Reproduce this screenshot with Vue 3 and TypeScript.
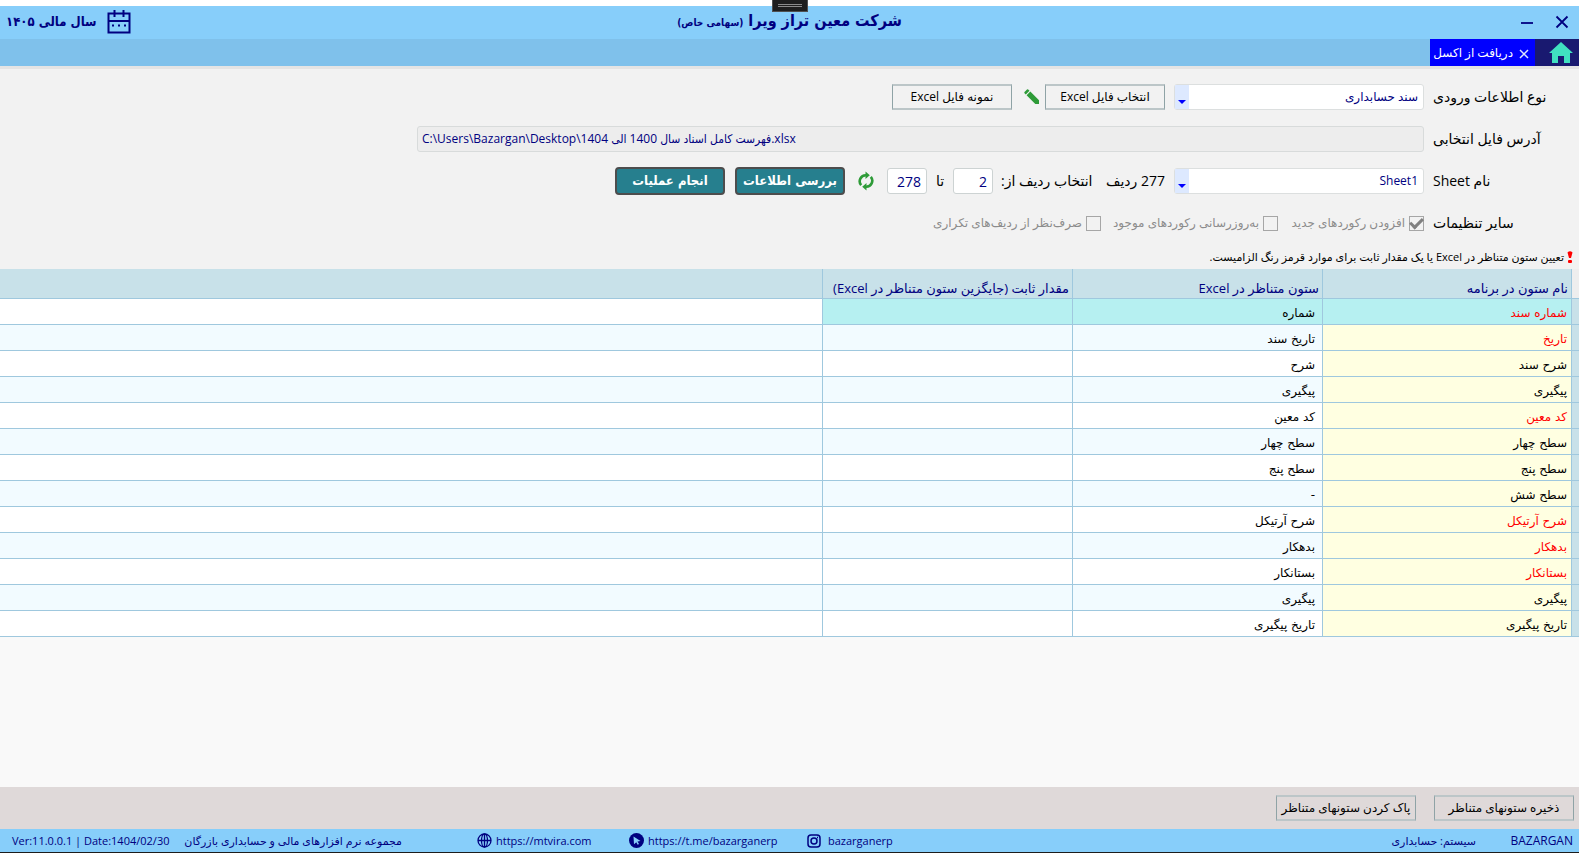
<script setup lang="ts">
import { ref } from 'vue'

interface MappingRow {
  name: string
  excel: string
  required?: boolean
}

const rows: MappingRow[] = [
  { name: 'شماره سند', excel: 'شماره', required: true },
  { name: 'تاریخ', excel: 'تاریخ سند', required: true },
  { name: 'شرح سند', excel: 'شرح' },
  { name: 'پیگیری', excel: 'پیگیری' },
  { name: 'کد معین', excel: 'کد معین', required: true },
  { name: 'سطح چهار', excel: 'سطح چهار' },
  { name: 'سطح پنج', excel: 'سطح پنج' },
  { name: 'سطح شش', excel: '-' },
  { name: 'شرح آرتیکل', excel: 'شرح آرتیکل', required: true },
  { name: 'بدهکار', excel: 'بدهکار', required: true },
  { name: 'بستانکار', excel: 'بستانکار', required: true },
  { name: 'پیگیری', excel: 'پیگیری' },
  { name: 'تاریخ پیگیری', excel: 'تاریخ پیگیری' },
]

const selected = ref(0)
const inputType = ref('سند حسابداری')
const sheet = ref('Sheet1')
const filePath = ref('C:\\Users\\Bazargan\\Desktop\\فهرست کامل اسناد سال 1400 الی 1404.xlsx')
const fromRow = ref('2')
const toRow = ref('278')
</script>

<template>
  <div class="window" dir="rtl">
    <div class="handle"><i></i><i></i></div>

    <header class="titlebar">
      <div class="side controls">
        <button type="button" aria-label="بستن">
          <svg width="14" height="14" viewBox="0 0 14 14"><path d="M1.5 1.5l11 11M12.5 1.5l-11 11" /></svg>
        </button>
        <button type="button" aria-label="کوچک کردن">
          <svg width="14" height="14" viewBox="0 0 14 14"><path d="M1 8h12" /></svg>
        </button>
      </div>
      <h1>شرکت معین تراز ویرا <small>(سهامی خاص)</small></h1>
      <div class="side year">
        <svg width="24" height="24" viewBox="0 0 24 24" fill="none" stroke="#000080" stroke-width="2">
          <rect x="1.5" y="3.5" width="21" height="19" />
          <path d="M1 11h22M7.5 0v7M16.5 0v7" />
          <path d="M5 15.5h2M11 15.5h2M17 15.5h2" />
        </svg>
        <span>سال مالی ۱۴۰۵</span>
      </div>
    </header>

    <nav class="tabs">
      <button type="button" class="home" aria-label="خانه">
        <svg width="24" height="22" viewBox="0 0 24 22"><path d="M12 0L0 11h3v10h6v-7h6v7h6V11h3z" fill="#40e0c0" /></svg>
      </button>
      <div class="tab">
        <button type="button" class="tab-close" aria-label="بستن زبانه">
          <svg width="10" height="10" viewBox="0 0 10 10"><path d="M1 1l8 8M9 1L1 9" stroke="#dfe4ff" stroke-width="1.5" /></svg>
        </button>
        <a href="#excel">دریافت از اکسل</a>
      </div>
    </nav>

    <form class="form" @submit.prevent>
      <div class="row">
        <label class="caption" for="type">نوع اطلاعات ورودی</label>
        <span class="combo">
          <select id="type" v-model="inputType"><option>سند حسابداری</option></select>
          <span class="arrow"></span>
        </span>
        <button type="button" class="btn pick">انتخاب فایل Excel</button>
        <svg class="pencil" width="16" height="16" viewBox="0 0 16 16" fill="#2e9b38">
          <path d="M0.5 3L3 0.5q0.6-0.5 1.2 0L5.5 1.8 1.8 5.5 0.5 4.2q-0.5-0.6 0-1.2zM2.6 6.3L6.3 2.6 15 11.3V15h-3.7z" />
        </svg>
        <button type="button" class="btn sample">نمونه فایل Excel</button>
      </div>

      <div class="row">
        <label class="caption" for="path">آدرس فایل انتخابی</label>
        <input id="path" v-model="filePath" class="path" type="text" dir="ltr" readonly />
      </div>

      <div class="row">
        <label class="caption" for="sheet">نام Sheet</label>
        <span class="combo">
          <select id="sheet" v-model="sheet"><option>Sheet1</option></select>
          <span class="arrow"></span>
        </span>
        <span class="count">277 ردیف</span>
        <label class="from" for="from">انتخاب ردیف از:</label>
        <input id="from" v-model="fromRow" class="num" type="text" />
        <label class="to" for="to">تا</label>
        <input id="to" v-model="toRow" class="num" type="text" />
        <button type="button" class="refresh" aria-label="بازخوانی">
          <svg width="16" height="20" viewBox="0 0 16 20" fill="none" stroke="#2e9b38" stroke-width="2.6">
            <path d="M3.2 14.2A6 6 0 0 1 8 4.3" />
            <path d="M12.8 5.8A6 6 0 0 1 8 15.7" />
            <path d="M7.5 0.5v7.6L11.8 4.3zM8.5 19.5v-7.6L4.2 15.7z" fill="#2e9b38" stroke="none" />
          </svg>
        </button>
        <button type="button" class="action">بررسی اطلاعات</button>
        <button type="button" class="action">انجام عملیات</button>
      </div>

      <div class="row">
        <span class="caption">سایر تنظیمات</span>
        <label class="check c1"><input type="checkbox" checked disabled /><span>افزودن رکوردهای جدید</span></label>
        <label class="check c2"><input type="checkbox" disabled /><span>به‌روزرسانی رکوردهای موجود</span></label>
        <label class="check c3"><input type="checkbox" disabled /><span>صرف‌نظر از ردیف‌های تکراری</span></label>
      </div>

      <p class="note">
        <svg width="6" height="12" viewBox="0 0 6 12" fill="#f00"><path d="M0.5 1.5Q3-1 5.5 1.5L4 7H2z" /><rect x="1" y="9" width="4" height="3" rx="1" /></svg>
        <span>تعیین ستون متناظر در Excel یا یک مقدار ثابت برای موارد قرمز رنگ الزامیست.</span>
      </p>
    </form>

    <main>
      <table>
        <colgroup>
          <col class="w-mark" /><col class="w-name" /><col class="w-col" /><col class="w-col" /><col />
        </colgroup>
        <thead>
          <tr>
            <td class="corner"></td>
            <th scope="col">نام ستون در برنامه</th>
            <th scope="col">ستون متناظر در Excel</th>
            <th scope="col">مقدار ثابت (جایگزین ستون متناظر در Excel)</th>
            <td class="rest"></td>
          </tr>
        </thead>
        <tbody>
          <tr v-for="(row, i) in rows" :key="i" :class="{ selected: i === selected }" @click="selected = i">
            <td class="mark"></td>
            <td class="name" :class="{ required: row.required }">{{ row.name }}</td>
            <td class="excel">{{ row.excel }}</td>
            <td class="fixed"></td>
            <td class="rest"></td>
          </tr>
        </tbody>
      </table>
    </main>

    <div class="actions">
      <button type="button" class="btn">ذخیره ستونهای متناظر</button>
      <button type="button" class="btn">پاک کردن ستونهای متناظر</button>
    </div>

    <footer class="status" dir="ltr">
      <span class="version">Ver:11.0.0.1 | Date:1404/02/30</span>
      <span class="vendor" dir="rtl">مجموعه نرم افزارهای مالی و حسابداری بازرگان</span>
      <a class="site" href="#site">
        <svg width="15" height="15" viewBox="0 0 15 15" fill="none" stroke="#000080" stroke-width="1.3">
          <circle cx="7.5" cy="7.5" r="6.5" /><ellipse cx="7.5" cy="7.5" rx="3" ry="6.5" /><path d="M7.5 1v13M1 7.5h13" />
        </svg>https://mtvira.com</a>
      <a class="telegram" href="#telegram">
        <svg width="15" height="15" viewBox="0 0 15 15">
          <circle cx="7.5" cy="7.5" r="7.5" fill="#000080" /><path d="M4.5 3.5l7 4.5-3 0.5 1.5 2.5-1.3 0.7-1.4-2.5-2.3 2z" fill="#87cefa" />
        </svg>https://t.me/bazarganerp</a>
      <a class="insta" href="#instagram">
        <svg width="14" height="14" viewBox="0 0 14 14" fill="none" stroke="#000080" stroke-width="1.5">
          <rect x="1" y="1" width="12" height="12" rx="3" /><circle cx="7" cy="7" r="3" /><path d="M10 3.5h1" />
        </svg>bazarganerp</a>
      <span class="system" dir="rtl">سیستم: حسابداری</span>
      <span class="user">BAZARGAN</span>
    </footer>
  </div>
</template>

<style>
body {
  margin: 0;
}
</style>

<style scoped>
.window {
  position: relative;
  display: flex;
  flex-direction: column;
  box-sizing: border-box;
  min-height: 100vh;
  padding-top: 6px;
  background: #fff;
  border-bottom: 1px solid #1c1c1c;
  font-family: "Open Sans", "DejaVu Sans", sans-serif;
  font-size: 12px;
  white-space: nowrap;
  overflow: hidden;
}
.window * {
  box-sizing: border-box;
}
button,
input,
select {
  font: inherit;
  margin: 0;
}
button {
  padding: 0;
  border: 0;
  background: none;
}
.handle {
  position: absolute;
  top: 0;
  left: 50%;
  width: 36px;
  height: 12px;
  margin-left: -18px;
  padding: 4px 5px;
  display: flex;
  flex-direction: column;
  gap: 1px;
  background: #1e1e1e;
  border: 1px solid #505050;
  border-top: 0;
}
.handle i {
  height: 1px;
  background: #8a8a8a;
}
.titlebar {
  display: flex;
  align-items: center;
  height: 33px;
  padding-bottom: 2px;
  background: #87cefa;
  color: #000080;
  font-family: "DejaVu Sans Condensed", "DejaVu Sans", sans-serif;
}
.side {
  flex: 1;
  display: flex;
  align-items: center;
}
.controls {
  gap: 21px;
  padding-right: 10px;
}
.controls button {
  display: flex;
}
.controls path {
  stroke: #000080;
  stroke-width: 1.8;
}
.titlebar h1 {
  margin: 0;
  padding-left: 4px;
  font-size: 16px;
  line-height: 30px;
  font-weight: 700;
}
.titlebar small {
  font-size: 10px;
}
.year {
  justify-content: flex-end;
  gap: 10px;
  padding-left: 6px;
  font-size: 13px;
  font-weight: 700;
}
.tabs {
  display: flex;
  height: 27px;
  background: #7fc1eb;
}
.home {
  display: flex;
  align-items: center;
  justify-content: center;
  width: 44px;
  padding-left: 8px;
  background: #191970;
}
.tab {
  display: flex;
  align-items: center;
  gap: 6px;
  width: 105px;
  padding-right: 6px;
  background: #00f;
}
.tab-close {
  display: flex;
  margin-top: 3px;
}
.tab a {
  color: #fff;
  text-decoration: none;
}
.form {
  display: flex;
  flex-direction: column;
  gap: 16px;
  padding-top: 18px;
  background: #f2f2f2;
  box-shadow: inset 0 3px 0 #e4e4e4;
}
.row {
  display: flex;
  align-items: center;
  height: 26px;
}
.caption {
  flex: none;
  width: 155px;
  padding: 0 0 2px 9px;
  text-align: left;
  font-size: 14px;
}
.combo {
  position: relative;
  flex: none;
  width: 250px;
  height: 26px;
}
.combo select {
  width: 100%;
  height: 100%;
  padding: 0 5px 2px 20px;
  appearance: none;
  border: 1px solid #dcdfdf;
  border-radius: 3px;
  background: #fff;
  color: #000080;
}
.arrow {
  position: absolute;
  left: 1px;
  top: 1px;
  width: 14px;
  height: 24px;
  background: #dde9ff;
  pointer-events: none;
}
.arrow::after {
  content: "";
  position: absolute;
  left: 3px;
  top: 15px;
  border: 4px solid transparent;
  border-top-color: #00f;
  border-bottom: 0;
}
.btn {
  flex: none;
  width: 120px;
  height: 26px;
  padding-bottom: 1px;
  border: 2px solid #bcc6c8;
  border-right: 1px solid #8fa3a6;
  border-left: 1px solid #8fa3a6;
  color: #000;
}
.pick {
  margin-right: 9px;
}
.pencil {
  margin: 0 5px 0 12px;
}
.path {
  flex: 0 1 1007px;
  min-width: 0;
  height: 26px;
  padding: 0 4px 1px;
  border: 1px solid #d8dbdb;
  border-radius: 3px;
  background: #ededed;
  color: #000080;
  font-family: "Open Sans", "DejaVu Sans Condensed", "DejaVu Sans", sans-serif;
}
.count {
  width: 76px;
  padding: 0 9px 2px 0;
  font-size: 14px;
}
.from {
  width: 105px;
  padding: 0 0 2px 8px;
  text-align: left;
  font-size: 14px;
}
.num {
  flex: none;
  width: 40px;
  height: 26px;
  padding: 0 5px;
  border: 1px solid #cdd3d3;
  border-radius: 3px;
  background: #fff;
  color: #000080;
  font-size: 14px;
  text-align: right;
}
.to {
  width: 26px;
  padding-bottom: 2px;
  text-align: center;
  font-size: 14px;
}
.refresh {
  display: flex;
  margin: 0 13px;
}
.action {
  flex: none;
  width: 110px;
  height: 28px;
  margin-left: 10px;
  padding-bottom: 2px;
  border: 2px solid #4d4d4d;
  border-radius: 4px;
  background: #267f8e;
  color: #fff;
  font-family: "DejaVu Sans Condensed", "DejaVu Sans", sans-serif;
  font-size: 13px;
  font-weight: 700;
}
.check {
  display: flex;
  align-items: center;
  gap: 4px;
  color: #8c8c8c;
}
.check span {
  padding-bottom: 2px;
}
.check input {
  flex: none;
  display: grid;
  justify-content: center;
  width: 15px;
  height: 15px;
  appearance: none;
  border: 1px solid #a6a6a6;
  background: #f2f2f2;
}
.check input:checked::after {
  content: "";
  box-sizing: border-box;
  width: 13px;
  height: 8px;
  margin-top: 1px;
  border: solid #808080;
  border-width: 0 0 3px 3px;
  transform: rotate(-45deg);
}
.c1 {
  width: 146px;
}
.c2 {
  width: 177px;
}
.note {
  display: flex;
  align-items: center;
  gap: 3px;
  height: 25px;
  margin: -8px 0 0;
  padding-right: 6px;
  font-size: 11px;
}
main {
  flex: 1;
  background: #f9f9f9;
}
table {
  width: 100%;
  table-layout: fixed;
  border-collapse: separate;
  border-spacing: 0;
  font-family: "DejaVu Sans", sans-serif;
  font-size: 12px;
}
.w-mark {
  width: 7px;
}
.w-name {
  width: 249px;
}
.w-col {
  width: 250px;
}
th,
td {
  height: 26px;
  padding: 2px 4px 0;
  border-bottom: 1px solid #9fc8de;
  border-right: 1px solid #9fc8de;
  text-align: right;
  line-height: 20px;
}
th:first-child,
td:first-child {
  border-right: 0;
}
thead th,
thead td {
  height: 30px;
  padding: 8px 3px 0 0;
  background: #c8e1e9;
  color: #000080;
  font-family: "Open Sans", "DejaVu Sans", sans-serif;
  font-size: 13px;
  font-weight: 400;
}
thead .corner {
  background: #eee;
}
tbody td {
  background: #fff;
}
tbody tr:nth-child(even) td {
  background: #f2fbff;
}
tbody tr .mark.mark {
  background: #c8e1e9;
}
tbody tr .name.name {
  background: #ffffe1;
}
.name.required {
  color: #f00;
}
.excel {
  padding-right: 7px;
}
tbody tr.selected .name.name,
tbody tr.selected .excel,
tbody tr.selected .fixed {
  background: #b6f0f1;
}
.actions {
  display: flex;
  align-items: center;
  gap: 18px;
  height: 42px;
  padding-right: 5px;
  background: #dfd9d9;
}
.actions .btn {
  width: 140px;
}
.status {
  display: flex;
  align-items: center;
  height: 23px;
  padding: 0 6px 0 12px;
  background: #87cefa;
  color: #000080;
  font-size: 11px;
}
.status a {
  display: flex;
  align-items: center;
  gap: 4px;
  color: inherit;
  text-decoration: none;
}
.version {
  width: 168px;
}
.vendor {
  width: 222px;
  text-align: right;
}
.site {
  width: 152px;
  margin-left: 75px;
}
.telegram {
  width: 178px;
}
.status .insta {
  gap: 7px;
}
.system {
  margin-left: auto;
}
.user {
  width: 97px;
  text-align: right;
  font-size: 12px;
}
</style>
